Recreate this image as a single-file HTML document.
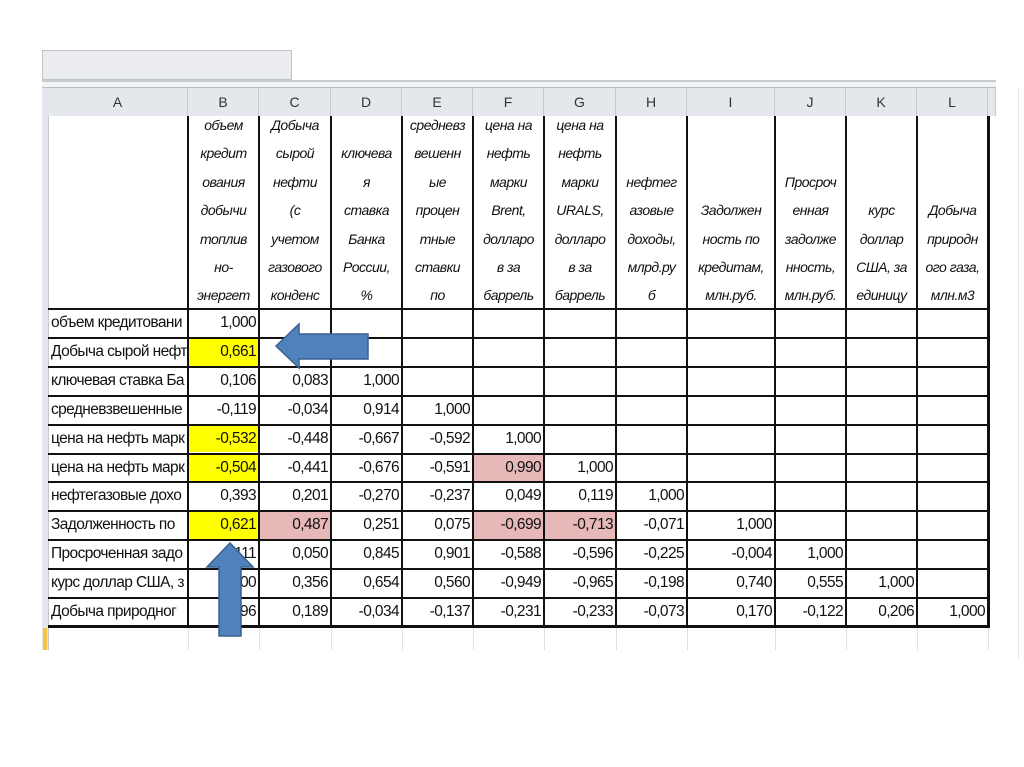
<!DOCTYPE html>
<html><head><meta charset="utf-8"><style>
body{margin:0;width:1024px;height:767px;background:#fff;position:relative;overflow:hidden;font-family:"Liberation Sans",sans-serif}
.a{position:absolute}
.c{position:absolute;box-sizing:border-box;overflow:hidden;white-space:nowrap;font-size:15.5px;letter-spacing:-0.6px;color:#111;line-height:29px;text-align:right;padding-right:3px}
.h{position:absolute;box-sizing:border-box;overflow:hidden;white-space:nowrap;font-size:14px;letter-spacing:-0.5px;font-style:italic;color:#111;text-align:center;line-height:28.4px}
.L{position:absolute;background:#111}
.ch{position:absolute;top:88px;height:28px;line-height:28px;font-size:14px;color:#333;text-align:center;background:#e4e7ec;border-right:1px solid #c6cad0;box-sizing:border-box}
</style></head><body>
<div class="a" style="left:42px;top:50px;width:250px;height:30px;background:#eaecef;border:1px solid #bfc3c8;box-sizing:border-box"></div>
<div class="a" style="left:42px;top:80px;width:954px;height:8px;background:#f2f3f5;border-top:2px solid #c8ccd1;border-bottom:1px solid #b8bcc2;box-sizing:border-box"></div>
<div class="a" style="left:42px;top:88px;width:6px;height:562px;background:#e4e7ec;border-right:1px solid #c6cad0"></div>
<div class="a" style="left:43px;top:628px;width:4px;height:22px;background:#f5c242"></div>
<div class="a" style="left:1018px;top:88px;width:1px;height:570px;background:#e6e6e6"></div>
<div id="root"></div>
<svg class="a" style="left:0;top:0" width="1024" height="767">
<path d="M276 346 L299 324 L299 334 L368 334 L368 359 L299 359 L299 368 Z" fill="#4f81bd" stroke="#3a6190" stroke-width="1.5"/>
<path d="M230 543 L253 567 L241 567 L241 636 L219 636 L219 567 L207 567 Z" fill="#4f81bd" stroke="#3a6190" stroke-width="1.5"/>
</svg>
<script>
var X=[48,188,259,331,402,473,544,616,687,775,846,917,988];
var letters="ABCDEFGHIJKL";
var root=document.getElementById('root');var s='';
for(var i=0;i<12;i++){s+='<div class="ch" style="left:'+X[i]+'px;width:'+(X[i+1]-X[i])+'px">'+letters[i]+'</div>';}
s+='<div class="ch" style="left:988px;width:8px"></div>';
var hd=[[],
["объем","кредит","ования","добычи","топлив","но-","энергет"],
["Добыча","сырой","нефти","(с","учетом","газового","конденс"],
["","ключева","я","ставка","Банка","России,","%"],
["средневз","вешенн","ые","процен","тные","ставки","по"],
["цена на","нефть","марки","Brent,","долларо","в за","баррель"],
["цена на","нефть","марки","URALS,","долларо","в за","баррель"],
["","","нефтег","азовые","доходы,","млрд.ру","б"],
["","","","Задолжен","ность по","кредитам,","млн.руб."],
["","","Просроч","енная","задолже","нность,","млн.руб."],
["","","","курс","доллар","США, за","единицу"],
["","","","Добыча","природн","ого газа,","млн.м3"]];
for(var i=1;i<12;i++){var t='';for(var k=0;k<7;k++){t+='<div style="position:absolute;left:0;right:0;top:'+(111+k*28.4-116)+'px">'+hd[i][k]+'</div>';}
s+='<div class="h" style="left:'+X[i]+'px;top:116px;width:'+(X[i+1]-X[i])+'px;height:192px">'+t+'</div>';}
var rows=[
["объем кредитовани","1,000"],
["Добыча сырой нефт","0,661","1,000"],
["ключевая ставка Ба","0,106","0,083","1,000"],
["средневзвешенные","-0,119","-0,034","0,914","1,000"],
["цена на нефть марк","-0,532","-0,448","-0,667","-0,592","1,000"],
["цена на нефть марк","-0,504","-0,441","-0,676","-0,591","0,990","1,000"],
["нефтегазовые дохо","0,393","0,201","-0,270","-0,237","0,049","0,119","1,000"],
["Задолженность по","0,621","0,487","0,251","0,075","-0,699","-0,713","-0,071","1,000"],
["Просроченная задо","0,111","0,050","0,845","0,901","-0,588","-0,596","-0,225","-0,004","1,000"],
["курс доллар США, з","0,300","0,356","0,654","0,560","-0,949","-0,965","-0,198","0,740","0,555","1,000"],
["Добыча природног","0,296","0,189","-0,034","-0,137","-0,231","-0,233","-0,073","0,170","-0,122","0,206","1,000"]];
var yel={"1,1":1,"4,1":1,"5,1":1,"7,1":1},pink={"5,5":1,"7,2":1,"7,5":1,"7,6":1};
var RH=28.9;
for(var r=0;r<11;r++){var y=308+r*RH;
for(var c=0;c<rows[r].length;c++){var bg=yel[r+','+c]?'#ffff00':(pink[r+','+c]?'#e6b8b7':'transparent');
var st='left:'+X[c]+'px;top:'+y+'px;width:'+(X[c+1]-X[c])+'px;height:'+RH+'px;background:'+bg+';';
if(c==0)st+='text-align:left;padding-left:3px;';
s+='<div class="c" style="'+st+'">'+rows[r][c]+'</div>';}
s+='<div class="L" style="left:48px;top:'+Math.round(y)+'px;width:940px;height:2px"></div>';}
s+='<div class="L" style="left:48px;top:625px;width:942px;height:3px"></div>';
for(var i=1;i<13;i++){s+='<div class="L" style="left:'+(X[i]-1)+'px;top:116px;width:'+(i==12?3:2)+'px;height:511px"></div>';}
for(var i=1;i<13;i++){s+='<div class="a" style="left:'+X[i]+'px;top:628px;width:1px;height:22px;background:#e2e2e2"></div>';}
root.innerHTML=s;
</script>
</body></html>
